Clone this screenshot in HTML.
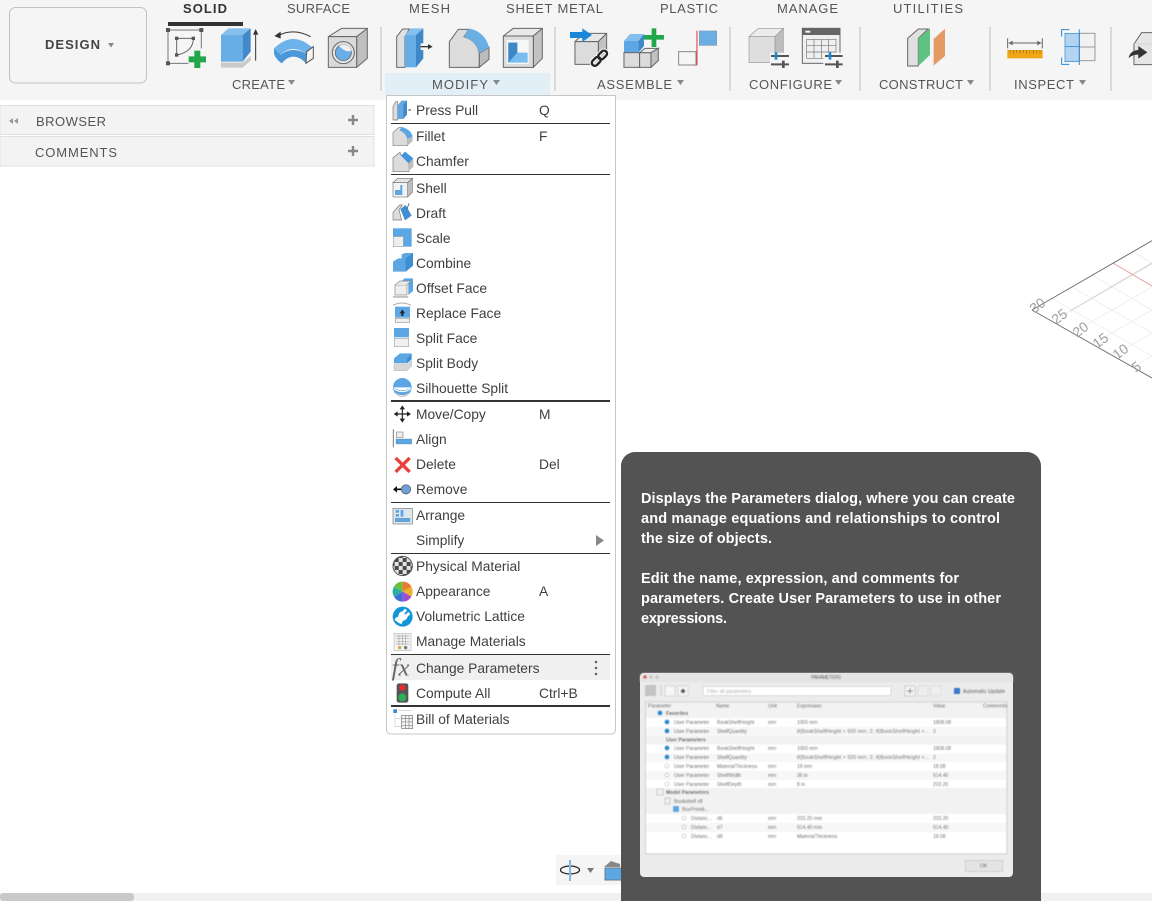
<!DOCTYPE html>
<html><head><meta charset="utf-8"><title>Design</title>
<style>
html,body{margin:0;padding:0;background:#fff;width:1152px;height:901px;overflow:hidden}
svg{position:absolute;left:0;top:0;display:block}
text{font-family:"Liberation Sans",Arial,sans-serif}
.tab{font-size:13px;fill:#555}
.lab{font-size:13px;fill:#555}
.m{font-size:13.8px;fill:#3f3f3f}
.t{font-size:14.5px;font-weight:bold;fill:#fff}
.g{font-size:14px;fill:#a0a0a0}
.x{font-size:5px;fill:#555}
.sk{stroke:#666;stroke-width:3;stroke-linejoin:round}
</style></head><body>
<svg width="1152" height="901" viewBox="0 0 1152 901" xmlns="http://www.w3.org/2000/svg">
<defs>
<filter id="bl" x="-5%" y="-5%" width="110%" height="110%"><feGaussianBlur stdDeviation=".5"/></filter>
<pattern id="chk" width="24" height="24" patternUnits="userSpaceOnUse" x="5" y="6"><rect width="24" height="24" fill="#e4e4e4"/><rect width="12" height="12" fill="#4a4a4a"/><rect x="12" y="12" width="12" height="12" fill="#4a4a4a"/></pattern>
<clipPath id="gridclip"><rect x="1020" y="230" width="132" height="160"/></clipPath>
</defs>

<rect width="1152" height="901" fill="#fff"/>

<!-- viewport grid -->
<g clip-path="url(#gridclip)" fill="none">
 <g stroke="#efefef" stroke-width="1">
  <path d="M1052 321.500L1152 264M1072 333L1152 287M1092 344.500L1152 310M1112 356L1152 333M1132 367.500L1152 356"/>
  <path d="M1052 298.500L1152 356M1072 287L1152 333M1092 275L1152 310M1133 252L1152 263"/>
 </g>
 <path d="M1070 311L1152 263" stroke="#cfcfcf"/>
 <path d="M1113 263L1152 286" stroke="#ee9a9a"/>
 <path d="M1032 310L1152 240.700M1032 310L1152 378" stroke="#707070"/>
 <text class="g" transform="translate(1034,314) rotate(-36)">30</text>
 <text class="g" transform="translate(1056,325) rotate(-36)">25</text>
 <text class="g" transform="translate(1077,338) rotate(-36)">20</text>
 <text class="g" transform="translate(1097,349) rotate(-36)">15</text>
 <text class="g" transform="translate(1117,360) rotate(-36)">10</text>
 <text class="g" transform="translate(1136,373) rotate(-36)">5</text>
</g>

<!-- toolbar bg -->
<rect x="0" y="0" width="1152" height="100" fill="#f5f5f5"/>
<rect x="385" y="73" width="165" height="22" fill="#e3eff6"/>
<g fill="#d9d9d9"><rect x="380" y="27" width="2" height="64"/><rect x="554" y="27" width="2" height="64"/><rect x="729" y="27" width="2" height="64"/><rect x="859" y="27" width="2" height="64"/><rect x="989" y="27" width="2" height="64"/><rect x="1110" y="27" width="2" height="64"/></g>

<!-- design btn -->
<rect x="9.500" y="7.500" width="137" height="75.500" rx="6" fill="#f5f5f5" stroke="#c2c2c2"/>
<text x="45" y="49" font-size="13" font-weight="bold" fill="#444" textLength="55">DESIGN</text>
<path d="M108 43h6l-3 4.500z" fill="#888"/>

<!-- tabs -->
<text class="tab" x="183" y="13" font-weight="bold" style="fill:#333" textLength="44">SOLID</text>
<text class="tab" x="287" y="13" textLength="63">SURFACE</text>
<text class="tab" x="409" y="13" textLength="41">MESH</text>
<text class="tab" x="506" y="13" textLength="97">SHEET METAL</text>
<text class="tab" x="660" y="13" textLength="58">PLASTIC</text>
<text class="tab" x="777" y="13" textLength="61">MANAGE</text>
<text class="tab" x="893" y="13" textLength="70">UTILITIES</text>
<rect x="168" y="22" width="75" height="4" fill="#333"/>

<!-- group labels -->
<text class="lab" x="232" y="89" textLength="53">CREATE</text>
<text class="lab" x="432" y="89" textLength="56">MODIFY</text>
<text class="lab" x="597" y="89" textLength="75">ASSEMBLE</text>
<text class="lab" x="749" y="89" textLength="83">CONFIGURE</text>
<text class="lab" x="879" y="89" textLength="84">CONSTRUCT</text>
<text class="lab" x="1014" y="89" textLength="60">INSPECT</text>
<g fill="#888"><path d="M288 80h7l-3.500 5zM493 80h7l-3.500 5zM677 80h7l-3.500 5zM835 80h7l-3.500 5zM967 80h7l-3.500 5zM1079 80h7l-3.500 5z"/></g>

<!-- toolbar icons: group 1 -->
<g transform="translate(160,20) scale(.3333)">
 <path d="M24 30H124V85M24 30V130H85" fill="none" stroke="#777" stroke-width="3"/>
 <g fill="#555"><rect x="18" y="24" width="12" height="12"/><rect x="118" y="24" width="12" height="12"/><rect x="18" y="124" width="12" height="12"/></g>
 <path d="M50 55V105M50 55H100M100 55Q100 95 50 105" fill="none" stroke="#666" stroke-width="3"/>
 <g fill="#555"><rect x="45" y="50" width="10" height="10"/><rect x="95" y="50" width="10" height="10"/><rect x="45" y="100" width="10" height="10"/></g>
 <path d="M103 92h18v17h17v18h-17v17h-18v-17H86v-18h17z" fill="#22a84a"/>
 <!-- extrude -->
 <path d="M183 45L205 25H272L248 45Z" fill="#85bfee"/>
 <rect x="183" y="45" width="65" height="80" fill="#68aee6"/>
 <path d="M248 45L272 25V95L248 125Z" fill="#4289c8"/>
 <path d="M183 128H248L272 108V122L248 143H183Z" fill="#c9c9c9"/>
 <path d="M287 122V38" stroke="#333" stroke-width="3"/><path d="M279 44L287 27L295 44Z" fill="#333"/>
 <!-- revolve -->
 <path d="M352 48Q400 22 452 50" fill="none" stroke="#333" stroke-width="3"/><path d="M343 48L362 35L362 56Z" fill="#333"/>
 <path d="M342 85Q392 38 440 70L462 85L438 100Q392 72 362 105Z" fill="#6db2ea"/>
 <path d="M342 85L362 105Q392 78 438 100V130Q400 90 365 130Q345 115 342 100Z" fill="#4a98da"/>
 <path d="M440 95L460 80V115L438 130Z" fill="#f5f5f5" stroke="#555" stroke-width="3"/>
 <!-- hole -->
 <path d="M505 50L545 25H622L590 50Z" fill="#e6e6e6" class="sk"/>
 <path d="M590 50L622 25V115L590 142Z" fill="#bfbfbf" class="sk"/>
 <rect x="505" y="50" width="85" height="92" fill="#dadada" class="sk"/>
 <circle cx="550" cy="98" r="33" fill="#e2e2e2" stroke="#666" stroke-width="3"/>
 <circle cx="550" cy="98" r="24" fill="#69aee6" stroke="#555" stroke-width="2"/>
 <path d="M537 78Q560 100 574 92A24 24 0 0 0 537 78Z" fill="#f0f0f0"/>
</g>

<!-- toolbar icons: group 2 (modify / assemble) -->
<g transform="translate(390,20) scale(.3333)">
 <path d="M20 50L38 27H58L45 50V142H20Z" fill="#e0e0e0" stroke="#666" stroke-width="3"/>
 <path d="M45 45L62 25H100L78 45Z" fill="#85bfee"/>
 <rect x="45" y="45" width="33" height="97" fill="#68aee6"/>
 <path d="M78 45L100 25V115L78 142Z" fill="#3f88c8"/>
 <rect x="92" y="70" width="36" height="20" fill="#f5f5f5"/>
 <path d="M92 80H118" stroke="#333" stroke-width="4"/><path d="M114 72L128 80L114 88Z" fill="#333"/>
 <!-- fillet -->
 <path d="M178 65L205 28H236L222 50Q262 62 268 100V142H178Z" fill="#dcdcdc" stroke="#666" stroke-width="3"/>
 <path d="M268 100L297 82V118L268 142Z" fill="#bcbcbc" stroke="#666" stroke-width="3"/>
 <path d="M236 25Q285 35 297 82L268 100Q262 65 222 50Z" fill="#6aaee4"/>
 <!-- shell -->
 <path d="M340 48L370 25H457L430 48Z" fill="#e8e8e8" class="sk"/>
 <path d="M430 48L457 25V115L430 142Z" fill="#c2c2c2" class="sk"/>
 <rect x="340" y="48" width="90" height="94" fill="#dcdcdc" class="sk"/>
 <rect x="350" y="60" width="66" height="72" fill="#f6f6f6"/>
 <path d="M355 68H382V98H413V128H355Z" fill="#78bcf0"/>
 <path d="M355 68H382V98L355 128Z" fill="#3f88c8"/>
 <!-- assemble joint -->
 <path d="M555 65L580 40H650L625 65Z" fill="#e8e8e8" class="sk"/>
 <path d="M625 65L650 40V110L625 133Z" fill="#c2c2c2" class="sk"/>
 <rect x="555" y="65" width="70" height="68" fill="#dcdcdc" class="sk"/>
 <path d="M540 36H577V25L606 45L577 66V54H540Z" fill="#1c87d8"/>
 <g fill="none" stroke="#f5f5f5" stroke-width="13" transform="rotate(-45 628 115)"><rect x="600" y="106" width="30" height="18" rx="9"/><rect x="627" y="106" width="30" height="18" rx="9"/></g>
 <g fill="none" stroke="#222" stroke-width="7" transform="rotate(-45 628 115)"><rect x="600" y="106" width="30" height="18" rx="9"/><rect x="627" y="106" width="30" height="18" rx="9"/></g>
 <!-- component -->
 <path d="M702 63L720 42H762L745 63Z" fill="#85bfee"/>
 <rect x="702" y="63" width="43" height="35" fill="#5ca6e4"/>
 <path d="M745 63L762 42V78L745 98Z" fill="#3f88c8"/>
 <rect x="702" y="98" width="47" height="44" fill="#dcdcdc" stroke="#666" stroke-width="3"/>
 <rect x="749" y="98" width="34" height="44" fill="#dcdcdc" stroke="#666" stroke-width="3"/>
 <path d="M749 98L765 85H805L783 98Z" fill="#ececec" stroke="#666" stroke-width="3"/>
 <path d="M783 98L805 85V122L783 142Z" fill="#c0c0c0" stroke="#666" stroke-width="3"/>
 <path d="M785 25h14v20h23v14h-23v22h-14V59h-23V45h23z" fill="#22a84a"/>
 <!-- align -->
 <rect x="866" y="95" width="52" height="40" fill="#f5f5f5" stroke="#888" stroke-width="3"/>
 <path d="M921 32V136" stroke="#d33" stroke-width="3"/>
 <rect x="928" y="33" width="52" height="43" fill="#6aaee4" stroke="#7d9cb6" stroke-width="2"/>
</g>

<!-- toolbar icons: group 3 -->
<g transform="translate(740,20) scale(.3333)">
 <path d="M27 50L55 25H130L105 50Z" fill="#ececec" stroke="#999" stroke-width="2"/>
 <path d="M105 50L130 25V105L105 128Z" fill="#bdbdbd" stroke="#999" stroke-width="2"/>
 <rect x="27" y="50" width="78" height="78" fill="#dedede" stroke="#999" stroke-width="2"/>
 <rect x="90" y="98" width="60" height="46" fill="#f5f5f5"/>
 <path d="M93 108H147M93 133H147" stroke="#555" stroke-width="6"/>
 <rect x="104" y="97" width="8" height="22" fill="#1c87d8"/><rect x="126" y="122" width="8" height="22" fill="#555"/>
 <!-- table -->
 <rect x="187" y="25" width="113" height="105" fill="#f0f0f0" stroke="#666" stroke-width="3"/>
 <rect x="187" y="25" width="113" height="20" fill="#666"/><rect x="196" y="32" width="15" height="6" fill="#f5f5f5"/>
 <path d="M200 58H288V115H200ZM200 77H288M200 96H288M222 58V115M244 58V115M266 58V115" fill="none" stroke="#777" stroke-width="2"/>
 <rect x="250" y="98" width="62" height="46" fill="#f5f5f5"/>
 <path d="M255 108H308M255 133H308" stroke="#555" stroke-width="6"/>
 <rect x="266" y="97" width="8" height="22" fill="#1c87d8"/><rect x="288" y="122" width="8" height="22" fill="#555"/>
 <!-- construct -->
 <path d="M503 55L535 27H565L535 55V138H503Z" fill="#e0e0e0" stroke="#666" stroke-width="3"/>
 <path d="M535 55L570 25V105L535 138Z" fill="#5fc282"/>
 <path d="M581 57L615 26V108L581 137Z" fill="#e59a64"/>
 <!-- measure -->
 <path d="M803 55V85M907 55V85M806 69H904" stroke="#666" stroke-width="3" fill="none"/>
 <path d="M806 69L818 62V76ZM904 69L892 62V76Z" fill="#666"/>
 <rect x="802" y="90" width="106" height="25" fill="#f2a516"/>
 <path d="M810 90v8M820 90v11M830 90v8M840 90v11M850 90v8M860 90v11M870 90v8M880 90v11M890 90v8M900 90v11" stroke="#8a6510" stroke-width="2"/>
 <!-- inspect -->
 <rect x="1018" y="40" width="47" height="41" fill="#f2f2f2" stroke="#999" stroke-width="3"/>
 <rect x="1018" y="81" width="47" height="41" fill="#f2f2f2" stroke="#999" stroke-width="3"/>
 <rect x="975" y="40" width="43" height="40" fill="#b3d3f0" stroke="#2a8ad4" stroke-width="2"/>
 <rect x="975" y="80" width="43" height="45" fill="#b3d3f0" stroke="#2a8ad4" stroke-width="2"/>
 <path d="M1018 28V135M988 29H965V50M988 133H965V112" fill="none" stroke="#2a8ad4" stroke-width="3"/>
 <!-- last -->
 <path d="M1182 72L1205 38H1240V134H1182Z" fill="#e6e6e6" stroke="#666" stroke-width="3"/>
 <path d="M1182 72H1240" stroke="#ccc" stroke-width="2"/>
 <path d="M1166 114Q1170 92 1195 90V78L1222 97L1195 116V104Q1180 102 1166 114Z" fill="#333"/>
</g>

<!-- panels -->
<rect x="0" y="105.500" width="374" height="29" fill="#f3f3f3" stroke="#e0e0e0"/>
<rect x="0" y="136.500" width="374" height="29.500" fill="#f3f3f3" stroke="#e0e0e0"/>
<text class="lab" x="36" y="126" textLength="70">BROWSER</text>
<text class="lab" x="35" y="157" textLength="82">COMMENTS</text>
<path d="M13 118v6l-4-3zM18 118v6l-4-3z" fill="#999"/>
<path d="M348 120h10M353 115v10M348 151h10M353 146v10" stroke="#888" stroke-width="2.400"/>

<!-- menu -->
<path d="M386.500 95.500H615.500V730a4 4 0 0 1-4 4H390.500a4 4 0 0 1-4-4Z" fill="#fff" stroke="#c6c6c6"/>
<rect x="391" y="655" width="219" height="25" fill="#f0f0f0"/>
<g fill="#333">
 <rect x="391" y="123" width="219" height="1"/><rect x="391" y="174" width="219" height="1"/>
 <rect x="391" y="400" width="219" height="2"/><rect x="391" y="502" width="219" height="1"/>
 <rect x="391" y="553" width="219" height="1"/><rect x="391" y="654" width="219" height="1"/>
 <rect x="391" y="705" width="219" height="2"/>
</g>
<text class="m" x="416" y="115">Press Pull</text><text class="m" x="539" y="115">Q</text>
<text class="m" x="416" y="141">Fillet</text><text class="m" x="539" y="141">F</text>
<text class="m" x="416" y="166">Chamfer</text>
<text class="m" x="416" y="193">Shell</text>
<text class="m" x="416" y="218">Draft</text>
<text class="m" x="416" y="243">Scale</text>
<text class="m" x="416" y="268">Combine</text>
<text class="m" x="416" y="293">Offset Face</text>
<text class="m" x="416" y="318">Replace Face</text>
<text class="m" x="416" y="343">Split Face</text>
<text class="m" x="416" y="368">Split Body</text>
<text class="m" x="416" y="393">Silhouette Split</text>
<text class="m" x="416" y="419">Move/Copy</text><text class="m" x="539" y="419">M</text>
<text class="m" x="416" y="444">Align</text>
<text class="m" x="416" y="469">Delete</text><text class="m" x="539" y="469">Del</text>
<text class="m" x="416" y="494">Remove</text>
<text class="m" x="416" y="520">Arrange</text>
<text class="m" x="416" y="545">Simplify</text>
<text class="m" x="416" y="571">Physical Material</text>
<text class="m" x="416" y="596">Appearance</text><text class="m" x="539" y="596">A</text>
<text class="m" x="416" y="621">Volumetric Lattice</text>
<text class="m" x="416" y="646">Manage Materials</text>
<text class="m" x="416" y="673">Change Parameters</text>
<text class="m" x="416" y="698">Compute All</text><text class="m" x="539" y="698">Ctrl+B</text>
<text class="m" x="416" y="724">Bill of Materials</text>
<g fill="#666"><circle cx="596" cy="662" r="1.300"/><circle cx="596" cy="668" r="1.300"/><circle cx="596" cy="674" r="1.300"/></g>
<path d="M596 535L604 540.500L596 546Z" fill="#888"/>

<!-- menu icons A -->
<g transform="translate(385,95) scale(.3333)">
 <path d="M24 35L32 20H38V75H24Z" fill="#ddd" stroke="#777" stroke-width="2"/>
 <path d="M38 30L50 17H66V58L55 72H38Z" fill="#62a9e4"/><path d="M55 30L66 17V58L55 72Z" fill="#3f88c8"/>
 <path d="M70 45H78" stroke="#333" stroke-width="3"/>
 <!-- fillet -->
 <path d="M24 112L42 97H50L46 106Q62 112 68 130V152H24Z" fill="#dcdcdc" stroke="#888" stroke-width="2"/>
 <path d="M50 96Q78 103 83 125L68 132Q62 112 44 106Z" fill="#5ca6e4"/>
 <path d="M68 132L83 125V138L68 152Z" fill="#bdbdbd"/>
 <!-- chamfer -->
 <path d="M24 188L45 172L48 180L72 205V230H24Z" fill="#dcdcdc" stroke="#777" stroke-width="2"/>
 <path d="M48 182L60 170L85 190L72 205Z" fill="#3f96de"/>
 <path d="M72 205L85 190V215L70 230Z" fill="#bdbdbd"/>
 <!-- shell -->
 <path d="M24 263L38 250H82L68 263Z" fill="#e6e6e6" stroke="#777" stroke-width="2"/>
 <path d="M68 263L82 250V292L68 306Z" fill="#bdbdbd" stroke="#777" stroke-width="2"/>
 <rect x="24" y="263" width="44" height="43" fill="#f2f2f2" stroke="#777" stroke-width="2"/>
 <path d="M30 285H46V270H52V300H30Z" fill="#5ca6e4"/>
 <!-- draft -->
 <path d="M24 352L44 330H52L42 345L50 375H24Z" fill="#dcdcdc" stroke="#777" stroke-width="2"/>
 <path d="M46 342L62 330L80 362L60 376Z" fill="#3f8dd2"/>
 <path d="M66 342L72 325" stroke="#333" stroke-width="2"/>
 <!-- scale -->
 <rect x="24" y="400" width="56" height="55" fill="#5ca6e4"/>
 <rect x="25" y="425" width="30" height="30" fill="#eee" stroke="#aaa" stroke-width="2"/>
 <!-- combine -->
 <path d="M24 500L40 490H50V478L60 474H84V512L62 530H24Z" fill="#5ca6e4"/>
 <path d="M62 490L84 474V512L62 530Z" fill="#3f8dd2"/>
 <!-- offset face -->
 <path d="M45 565L58 550H84V588L70 600V565Z" fill="#5ca6e4"/>
 <rect x="30" y="570" width="36" height="30" fill="#eee" stroke="#888" stroke-width="2"/>
 <path d="M30 570L45 558H78L66 570" fill="#e8e8e8" stroke="#888" stroke-width="2"/>
 <path d="M24 606H70" stroke="#555" stroke-width="2"/>
</g>

<!-- menu icons B -->
<g transform="translate(385,300) scale(.3333)">
 <path d="M24 16Q50 2 78 16" fill="none" stroke="#aaa" stroke-width="3"/>
 <rect x="30" y="20" width="45" height="33" fill="#5ca6e4"/>
 <path d="M52 28L60 40H55V48H49V40H44Z" fill="#223"/>
 <rect x="31" y="55" width="43" height="12" fill="#efefef" stroke="#999" stroke-width="2"/>
 <!-- split face -->
 <rect x="27" y="84" width="45" height="28" fill="#5ca6e4"/>
 <rect x="28" y="115" width="43" height="25" fill="#f0f0f0" stroke="#aaa" stroke-width="2"/>
 <!-- split body -->
 <path d="M27 175L45 160H80L66 175V190H27Z" fill="#5ca6e4"/><path d="M66 175L80 160V178L66 190Z" fill="#3f8dd2"/>
 <path d="M27 194H66L80 182V198L66 212H27Z" fill="#d6d6d6" stroke="#999" stroke-width="1"/>
 <!-- silhouette -->
 <path d="M24 262A28 28 0 0 1 80 262Z" fill="#5ca6e4"/>
 <path d="M24 262Q52 280 80 262A28 28 0 0 1 24 262Z" fill="#5ca6e4"/>
 <path d="M26 266Q52 284 78 266" fill="none" stroke="#fff" stroke-width="3"/>
 <path d="M28 276A28 28 0 0 0 76 276Q52 294 28 276Z" fill="#e4e4e4" stroke="#999" stroke-width="1"/>
 <!-- move -->
 <path d="M52 322V362M32 342H72" stroke="#222" stroke-width="3.500"/>
 <path d="M52 316L60 328H44ZM52 368L60 356H44ZM26 342L38 334V350ZM78 342L66 334V350Z" fill="#222"/>
 <!-- align -->
 <path d="M25 388V442" stroke="#777" stroke-width="3"/>
 <rect x="34" y="396" width="20" height="16" fill="#eee" stroke="#888" stroke-width="2"/>
 <rect x="33" y="417" width="47" height="15" fill="#5ca6e4" stroke="#4a7ea8" stroke-width="1"/>
 <!-- delete -->
 <path d="M32 474L74 516M74 474L32 516" stroke="#e8403c" stroke-width="10"/>
 <!-- remove -->
 <path d="M30 568H50" stroke="#111" stroke-width="5"/><path d="M24 568L36 558V578Z" fill="#111"/>
 <circle cx="63" cy="568" r="14" fill="#6f9fd8" stroke="#555" stroke-width="2"/>
</g>

<!-- menu icons C -->
<g transform="translate(385,500) scale(.3333)">
 <rect x="24" y="25" width="58" height="47" fill="#dfe6ec" stroke="#777" stroke-width="2"/>
 <rect x="32" y="30" width="10" height="8" fill="#5ca6e4"/><rect x="32" y="42" width="10" height="8" fill="#5ca6e4"/><rect x="47" y="30" width="8" height="20" fill="#5ca6e4"/>
 <rect x="31" y="55" width="44" height="10" fill="#5ca6e4" stroke="#4a7ea8" stroke-width="1"/>
 <!-- physical material -->
 <circle cx="53" cy="198" r="29" fill="url(#chk)" stroke="#555" stroke-width="3"/>
 <!-- appearance -->
 <path d="M53 275L53 245A30 30 0 0 1 79 260Z" fill="#ef7a2e"/>
 <path d="M53 275L79 260A30 30 0 0 1 79 290Z" fill="#ecb12c"/>
 <path d="M53 275L79 290A30 30 0 0 1 53 305Z" fill="#a24cd0"/>
 <path d="M53 275L53 305A30 30 0 0 1 27 290Z" fill="#3d6fd8"/>
 <path d="M53 275L27 290A30 30 0 0 1 27 260Z" fill="#2bb0a0"/>
 <path d="M53 275L27 260A30 30 0 0 1 53 245Z" fill="#6fbe3e"/>
 <!-- lattice -->
 <circle cx="53" cy="350" r="30" fill="#1296d8"/>
 <path d="M28 358Q40 370 50 372L54 362Q64 362 68 350L76 342L70 336L62 344L58 340L66 332L60 326L52 334Q40 336 40 350L34 352Z" fill="#fff"/>
 <!-- manage materials -->
 <rect x="27" y="400" width="51" height="52" fill="#f4f4f4" stroke="#bbb" stroke-width="2"/>
 <path d="M32 408H73M32 416H73M32 424H73M32 432H73M42 404V436M52 404V436M62 404V436" stroke="#a8a8a8" stroke-width="2"/>
 <circle cx="44" cy="443" r="5" fill="#d9a441"/><circle cx="62" cy="443" r="5" fill="#777"/>
 <!-- fx -->
 <text x="20" y="526" font-size="74" font-style="italic" style="font-family:'Liberation Serif',serif" fill="#666">fx</text>
 <!-- compute -->
 <rect x="35" y="550" width="35" height="58" rx="7" fill="#555"/>
 <circle cx="52" cy="563" r="9" fill="#ee2b2b"/><circle cx="52" cy="592" r="12" fill="#2eb058"/>
 <!-- bom -->
 <rect x="25" y="628" width="11" height="11" fill="#3f88c8"/>
 <path d="M30 640V680M30 655H50M30 680H50M40 632H80" stroke="#ccc" stroke-width="2" fill="none"/>
 <rect x="50" y="646" width="33" height="40" fill="#f4f4f4" stroke="#777" stroke-width="2"/>
 <path d="M50 656H83M50 666H83M50 676H83M62 646V686M72 646V686" stroke="#888" stroke-width="2"/>
</g>

<!-- nav bar -->
<rect x="556" y="855" width="70" height="30" fill="#f5f5f5"/>
<ellipse cx="570" cy="870" rx="9.500" ry="4" fill="none" stroke="#222" stroke-width="1.300"/>
<path d="M570 860V881" stroke="#7db8e4" stroke-width="2"/>
<path d="M587 868h7l-3.500 5z" fill="#777"/>
<path d="M604 867L611 861L620 864V867Z" fill="#888"/>
<rect x="605" y="868" width="17" height="12" fill="#5ca6e4" stroke="#6a7a88"/>

<!-- scrollbar -->
<rect x="0" y="893" width="1152" height="8" fill="#f1f1f1"/>
<rect x="0" y="893" width="134" height="8" rx="3" fill="#c9c9c9"/>

<!-- tooltip -->
<path d="M621 901V466a14 14 0 0 1 14-14H1027a14 14 0 0 1 14 14V901Z" fill="#535353"/>
<text class="t" x="641" y="503" textLength="374">Displays the Parameters dialog, where you can create</text>
<text class="t" x="641" y="523" textLength="359">and manage equations and relationships to control</text>
<text class="t" x="641" y="543" textLength="131">the size of objects.</text>
<text class="t" x="641" y="583" textLength="318">Edit the name, expression, and comments for</text>
<text class="t" x="641" y="603" textLength="360">parameters. Create User Parameters to use in other</text>
<text class="t" x="641" y="623" textLength="86">expressions.</text>

<!-- tooltip image -->
<rect x="640" y="673" width="373" height="204" rx="4" fill="#ececec"/>
<g filter="url(#bl)">
 <path d="M640 682V677a4 4 0 0 1 4-4H1009a4 4 0 0 1 4 4V682Z" fill="#e4e4e4"/>
 <circle cx="645" cy="677" r="1.800" fill="#e0524a"/><circle cx="651" cy="677" r="1.800" fill="#c8c8c8"/><circle cx="657" cy="677" r="1.800" fill="#c8c8c8"/>
 <text class="x" x="811" y="679" textLength="30">PARAMETERS</text>
 <rect x="645" y="685" width="11" height="11" fill="#c4c4c4"/>
 <path d="M661 685V696" stroke="#bbb" stroke-width=".700"/>
 <rect x="665" y="686" width="10" height="10" fill="#f6f6f6" stroke="#bbb" stroke-width=".500"/>
 <rect x="678" y="686" width="10" height="10" fill="#f6f6f6" stroke="#bbb" stroke-width=".500"/>
 <path d="M683 688l1 2h2l-1.500 1.500.5 2-2-1-2 1 .5-2L680 690h2z" fill="#444"/>
 <rect x="703" y="686.500" width="188" height="9" fill="#fff" stroke="#bbb" stroke-width=".500"/>
 <text class="x" x="707" y="693" style="fill:#aaa">Filter all parameters</text>
 <rect x="905" y="686" width="10" height="10" fill="#f4f4f4" stroke="#aaa" stroke-width=".500"/><path d="M907 691h6M910 688v6" stroke="#555" stroke-width=".700"/>
 <rect x="918" y="686" width="10" height="10" fill="#eee" stroke="#ccc" stroke-width=".500"/>
 <rect x="931" y="686" width="10" height="10" fill="#eee" stroke="#ccc" stroke-width=".500"/>
 <rect x="954" y="688" width="6" height="6" fill="#3b78c8"/>
 <text class="x" x="963" y="693" textLength="42">Automatic Update</text>
 <rect x="645.500" y="702" width="361.500" height="152" fill="#f2f2f2" stroke="#c4c4c4" stroke-width=".700"/>
 <text class="x" x="648" y="707.500">Parameter</text><text class="x" x="716" y="707.500">Name</text><text class="x" x="768" y="707.500">Unit</text><text class="x" x="797" y="707.500">Expression</text><text class="x" x="933" y="707.500">Value</text><text class="x" x="983" y="707.500">Comments</text>
 <g fill="#fff">
  <rect x="646" y="718" width="360" height="9"/><rect x="646" y="727" width="360" height="9" fill="#f7f7f7"/>
  <rect x="646" y="744.500" width="360" height="9"/><rect x="646" y="753.500" width="360" height="9" fill="#f7f7f7"/><rect x="646" y="762" width="360" height="9"/><rect x="646" y="771" width="360" height="9" fill="#f7f7f7"/><rect x="646" y="780" width="360" height="8"/>
  <rect x="646" y="814" width="360" height="9"/><rect x="646" y="823" width="360" height="9" fill="#f7f7f7"/><rect x="646" y="832" width="360" height="9"/><rect x="646" y="841" width="360" height="12"/>
 </g>
 <g fill="#1f8fd0"><circle cx="667" cy="722" r="2.500"/><circle cx="667" cy="731" r="2.500"/><circle cx="660" cy="713" r="2.500"/><circle cx="667" cy="748" r="2.500"/><circle cx="667" cy="757" r="2.500"/></g>
 <g fill="none" stroke="#aaa" stroke-width=".600"><circle cx="667" cy="766" r="2"/><circle cx="667" cy="775" r="2"/><circle cx="667" cy="784" r="2"/><circle cx="684" cy="818" r="2"/><circle cx="684" cy="827" r="2"/><circle cx="684" cy="836" r="2"/><rect x="657" y="789" width="6" height="6"/><rect x="665" y="798" width="5" height="6"/></g>
 <rect x="673" y="806" width="6" height="6" fill="#5ca6e4"/>
 <g>
  <text class="x" x="666" y="715" font-weight="bold">Favorites</text>
  <text class="x" x="674" y="724">User Parameter</text><text class="x" x="717" y="724">BookShelfHeight</text><text class="x" x="768" y="724">mm</text><text class="x" x="797" y="724">1000 mm</text><text class="x" x="933" y="724">1808.08</text>
  <text class="x" x="674" y="733">User Parameter</text><text class="x" x="717" y="733">ShelfQuantity</text><text class="x" x="797" y="733" textLength="132">if(BookShelfHeight + 500 mm; 2; if(BookShelfHeight +...</text><text class="x" x="933" y="733">3</text>
  <text class="x" x="666" y="741.500" font-weight="bold">User Parameters</text>
  <text class="x" x="674" y="750">User Parameter</text><text class="x" x="717" y="750">BookShelfHeight</text><text class="x" x="768" y="750">mm</text><text class="x" x="797" y="750">1000 mm</text><text class="x" x="933" y="750">1808.08</text>
  <text class="x" x="674" y="759">User Parameter</text><text class="x" x="717" y="759">ShelfQuantity</text><text class="x" x="797" y="759" textLength="132">if(BookShelfHeight + 500 mm; 2; if(BookShelfHeight +...</text><text class="x" x="933" y="759">3</text>
  <text class="x" x="674" y="768">User Parameter</text><text class="x" x="717" y="768">MaterialThickness</text><text class="x" x="768" y="768">mm</text><text class="x" x="797" y="768">18 mm</text><text class="x" x="933" y="768">18.08</text>
  <text class="x" x="674" y="777">User Parameter</text><text class="x" x="717" y="777">ShelfWidth</text><text class="x" x="768" y="777">mm</text><text class="x" x="797" y="777">36 in</text><text class="x" x="933" y="777">914.40</text>
  <text class="x" x="674" y="786">User Parameter</text><text class="x" x="717" y="786">ShelfDepth</text><text class="x" x="768" y="786">mm</text><text class="x" x="797" y="786">8 in</text><text class="x" x="933" y="786">203.20</text>
  <text class="x" x="666" y="794" font-weight="bold">Model Parameters</text>
  <text class="x" x="674" y="803">Bookshelf v8</text>
  <text class="x" x="682" y="811">BoxPrimiti...</text>
  <text class="x" x="691" y="820">Distanc...</text><text class="x" x="717" y="820">d6</text><text class="x" x="768" y="820">mm</text><text class="x" x="797" y="820">203.20 mm</text><text class="x" x="933" y="820">203.20</text>
  <text class="x" x="691" y="829">Distanc...</text><text class="x" x="717" y="829">d7</text><text class="x" x="768" y="829">mm</text><text class="x" x="797" y="829">914.40 mm</text><text class="x" x="933" y="829">914.40</text>
  <text class="x" x="691" y="838">Distanc...</text><text class="x" x="717" y="838">d8</text><text class="x" x="768" y="838">mm</text><text class="x" x="797" y="838">MaterialThickness</text><text class="x" x="933" y="838">18.08</text>
 </g>
 <rect x="965.500" y="860.500" width="37" height="11" fill="#e4e4e4" stroke="#bbb" stroke-width=".600"/>
 <text class="x" x="980" y="867.500">OK</text>
</g>
</svg>
</body></html>
